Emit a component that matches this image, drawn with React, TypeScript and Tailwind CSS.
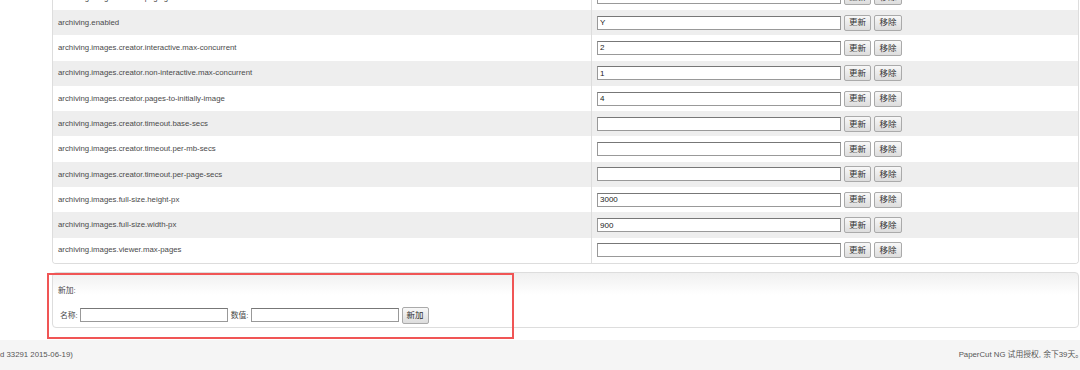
import React from 'react';

const rows: { name: string; value: string }[] = [
  { name: 'archiving.images.enable-paging', value: 'HYBRID' },
  { name: 'archiving.enabled', value: 'Y' },
  { name: 'archiving.images.creator.interactive.max-concurrent', value: '2' },
  { name: 'archiving.images.creator.non-interactive.max-concurrent', value: '1' },
  { name: 'archiving.images.creator.pages-to-initially-image', value: '4' },
  { name: 'archiving.images.creator.timeout.base-secs', value: '' },
  { name: 'archiving.images.creator.timeout.per-mb-secs', value: '' },
  { name: 'archiving.images.creator.timeout.per-page-secs', value: '' },
  { name: 'archiving.images.full-size.height-px', value: '3000' },
  { name: 'archiving.images.full-size.width-px', value: '900' },
  { name: 'archiving.images.viewer.max-pages', value: '' },
];

const btn =
  'h-[16px] px-[3px] border border-[#aaaaaa] rounded-[2px] bg-gradient-to-b from-[#f8f8f8] to-[#dddddd] text-[8.5px] text-[#333] leading-none';
const inp =
  'h-[14px] border border-[#999999] border-t-[#777777] bg-white px-[2px] text-[8px] text-[#222] outline-none';

function App() {
  return (
    <div
      className="relative w-[1080px] h-[370px] overflow-hidden bg-white text-[7.8px] text-[#4a4a4a]"
      style={{ fontFamily: '"Liberation Sans", "Noto Sans CJK SC", sans-serif' }}
    >
      <div className="h-[340px] flex flex-col pl-[52px] pr-[1px]">
        <div className="-mt-[15.3px] border border-t-0 border-[#dddddd] rounded-b-[4px] overflow-hidden">
          {rows.map((r, i) => (
            <div
              key={r.name}
              className={`grid grid-cols-[539px_1fr] h-[25.3px] ${i % 2 === 1 ? 'bg-[#eeeeee]' : 'bg-white'}`}
            >
              <div className="flex items-center pl-[5px] border-r border-[#dddddd]">{r.name}</div>
              <div className="flex items-center pl-[5px] gap-[3px]">
                <input className={`${inp} w-[244px]`} defaultValue={r.value} />
                <button className={`${btn} w-[27px]`}>更新</button>
                <button className={`${btn} w-[28px]`}>移除</button>
              </div>
            </div>
          ))}
        </div>

        <div className="mt-[8px] h-[56px] border border-[#dddddd] rounded-[4px] bg-gradient-to-b from-[#f0f0f0] to-white to-[40%] pl-[5px] pt-[12px]">
          <div className="h-[12px] leading-[12px]">新加:</div>
          <div className="mt-[10px] flex items-center gap-[2px] pl-[2px]">
            <span>名称:</span>
            <input className={`${inp} w-[148px]`} />
            <span className="ml-[1px]">数值:</span>
            <input className={`${inp} w-[148px]`} />
            <button className={`${btn} ml-[1px] w-[27px] h-[17px]`}>新加</button>
          </div>
        </div>
      </div>

      <div className="h-[30px] bg-[#f5f5f5] flex items-center justify-between text-[#555]">
        <span>d 33291 2015-06-19)</span>
        <span className="-mr-[3px]">PaperCut NG 试用授权, 余下39天。</span>
      </div>

      <div className="absolute left-[47px] top-[273px] w-[467px] h-[66px] border-[2.5px] border-[#f05555] pointer-events-none" />
    </div>
  );
}

export default App;
